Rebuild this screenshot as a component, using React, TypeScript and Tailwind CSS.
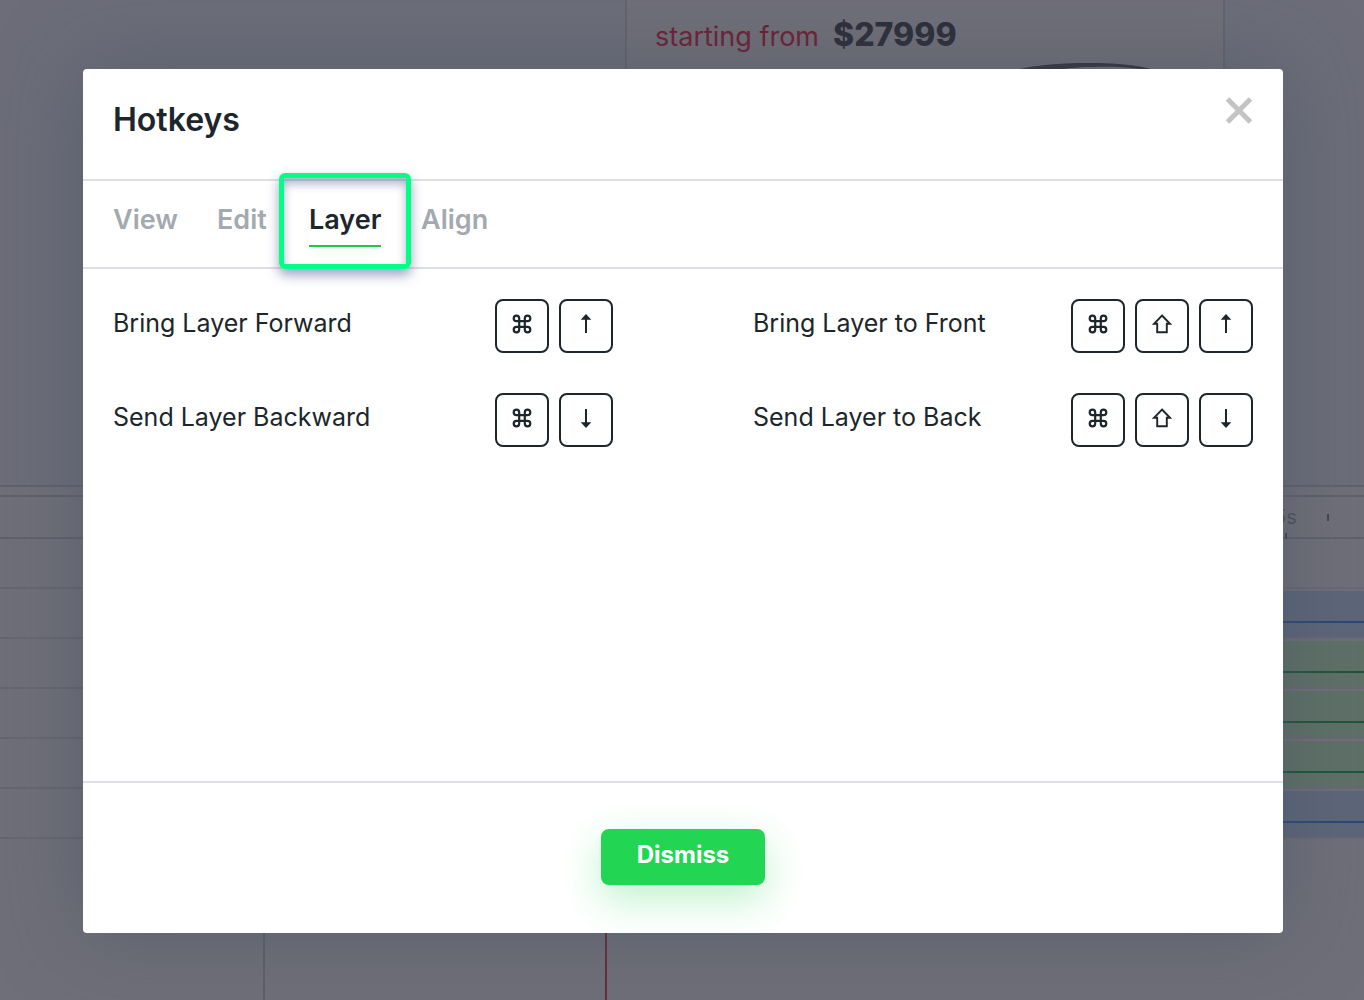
import React, { useState } from "react";

type KeyName = "cmd" | "shift" | "up" | "down";

const tabs = [
  { name: "View", width: "w-16" },
  { name: "Edit", width: "w-[52px]" },
  { name: "Layer", width: "w-[72px]" },
  { name: "Align", width: "w-[68px]" },
];

const hotkeys: { label: string; keys: KeyName[] }[] = [
  { label: "Bring Layer Forward", keys: ["cmd", "up"] },
  { label: "Bring Layer to Front", keys: ["cmd", "shift", "up"] },
  { label: "Send Layer Backward", keys: ["cmd", "down"] },
  { label: "Send Layer to Back", keys: ["cmd", "shift", "down"] },
];

const clips = ["none", "blue", "green", "green", "green", "blue"];

const keyLabels: Record<KeyName, string> = {
  cmd: "Command",
  shift: "Shift",
  up: "Arrow up",
  down: "Arrow down",
};

function KeyIcon({ name }: { name: KeyName }) {
  return (
    <svg width="20" height="20" viewBox="0 0 20 20" fill="none" stroke="currentColor" role="img" aria-label={keyLabels[name]}>
      {name === "cmd" && (
        <path
          strokeWidth="2.2"
          d="M7.200 7.200H4.500C2.600 7.200 1.700 6 1.700 4.500C1.700 2.900 2.900 1.700 4.500 1.700C6.100 1.700 7.200 2.900 7.200 4.500V15.500C7.200 17.100 6.100 18.300 4.500 18.300C2.900 18.300 1.700 17.100 1.700 15.500C1.700 14 2.600 12.800 4.500 12.800H15.500C17.400 12.800 18.300 14 18.300 15.500C18.300 17.100 17.100 18.300 15.500 18.300C13.900 18.300 12.800 17.100 12.800 15.500V4.500C12.800 2.900 13.900 1.700 15.500 1.700C17.100 1.700 18.300 2.900 18.300 4.500C18.300 6 17.400 7.200 15.500 7.200H7.200Z"
        />
      )}
      {name === "shift" && <path strokeWidth="1.9" d="M10 1.500L18 9.800H14.800V18.200H5.200V9.800H2L10 1.500Z" />}
      {name === "up" && (
        <>
          <path strokeWidth="2" d="M10 5V19" />
          <path fill="currentColor" stroke="none" d="M10 0L15.300 5.800H4.700Z" />
        </>
      )}
      {name === "down" && (
        <>
          <path strokeWidth="2" d="M10 1V15" />
          <path fill="currentColor" stroke="none" d="M10 20L15.300 14.200H4.700Z" />
        </>
      )}
    </svg>
  );
}

function Clip({ kind }: { kind: string }) {
  if (kind === "none") return null;
  return kind === "blue" ? (
    <div className="h-[46px] bg-[#5d6679] pt-[30px]">
      <div className="h-0.5 bg-[#2b4877]" />
    </div>
  ) : (
    <div className="h-[46px] bg-[#5f7067] pt-[30px]">
      <div className="h-0.5 bg-[#1e563b]" />
    </div>
  );
}

function Editor() {
  return (
    <div className="absolute inset-0 flex flex-col overflow-hidden bg-[#6f6f79]" aria-hidden="true">
      <div className="flex h-[485px] shrink-0 bg-[#6c6d79] pl-[625px]">
        <div className="w-[600px] border-x-2 border-[#62646f] bg-[#706f79]">
          <div className="flex items-baseline gap-3.5 whitespace-nowrap pl-7 pt-[15px]">
            <span className="text-[27px] leading-10 text-[#6e2034]">starting from</span>
            <span className="text-[32px] font-extrabold leading-10 text-[#2d2e39]">$27999</span>
          </div>
          <svg className="ml-[350px] mt-1" width="230" height="40" viewBox="0 0 230 40">
            <path d="M20 14C45 6 70 2 110 2C145 2 165 4 195 14C165 7 145 5 115 6C95 6 80 8 68 14L60 40H0Z" fill="#34323f" />
          </svg>
        </div>
      </div>
      <div className="h-3 shrink-0 border-y-2 border-[#60616c]" />
      <div className="flex grow">
        <div className="w-[265px] shrink-0 border-r-2 border-[#5d5f6b]">
          <div className="h-[42px] border-b-2 border-[#60616c]" />
          {clips.map((_, i) => (
            <div key={i} className="h-[50px] border-b-2 border-[#66666f]" />
          ))}
        </div>
        <div className="relative grow">
          <div className="flex h-[42px] border-b-2 border-[#60616c] pl-[1009px]">
            <span className="text-xl leading-10 text-[#50515c]">5s</span>
            <span className="mt-[17px] ml-[30px] h-[7px] w-0.5 bg-[#454651]" />
          </div>
          {clips.map((kind, i) => (
            <div key={i} className="h-[50px] border-b-2 border-[#6a6874] pt-0.5">
              <Clip kind={kind} />
            </div>
          ))}
          <div className="absolute inset-y-0 left-[340px] w-0.5 bg-[#692b3a]" />
          <div className="absolute left-[1020px] top-9 h-1.5 w-0.5 bg-[#454651]" />
        </div>
      </div>
    </div>
  );
}

export default function App() {
  const [active, setActive] = useState("Layer");
  const [open, setOpen] = useState(true);

  return (
    <main className="relative min-h-screen overflow-hidden font-['Inter',sans-serif] text-[#1c262b]">
      <Editor />
      {open && (
        <div className="relative pb-[67px] pl-[83px] pr-[81px] pt-[69px]">
          <section
            role="dialog"
            aria-modal="true"
            aria-labelledby="hotkeys-title"
            className="mx-auto flex max-w-[1200px] flex-col rounded bg-white shadow-[0_0_80px_rgba(68,82,96,0.5)]"
          >
            <header className="flex h-28 items-start justify-between border-b-2 border-[#dfe0e5] px-[30px] pt-7">
              <h1 id="hotkeys-title" className="text-[32px] font-semibold leading-[46px]">
                Hotkeys
              </h1>
              <button type="button" aria-label="Close" onClick={() => setOpen(false)} className="text-[#c3c3c3]">
                <svg width="28" height="28" viewBox="0 0 28 28" fill="none" stroke="currentColor" strokeWidth="5">
                  <path d="M2.500 2L25.500 25M25.500 2L2.500 25" />
                </svg>
              </button>
            </header>

            <nav role="tablist" className="flex h-[88px] gap-10 border-b-2 border-[#dfe0e5] px-[30px] pt-4">
              {tabs.map((tab) => (
                <div key={tab.name} className={`relative ${tab.width}`}>
                  {active === tab.name && (
                    <div className="pointer-events-none absolute -left-[30px] -right-[30px] -top-6 h-24 rounded-md border-[5px] border-[#00ff87] shadow-[0_6px_12px_rgba(50,75,130,0.5),inset_0_6px_10px_rgba(50,75,130,0.4)]" />
                  )}
                  <button
                    role="tab"
                    type="button"
                    aria-selected={active === tab.name}
                    onClick={() => setActive(tab.name)}
                    className={`h-[50px] w-full whitespace-nowrap border-b-2 pb-0.5 text-left text-[27px] font-semibold leading-10 ${
                      active === tab.name
                        ? "border-[#22c552] text-[#1c262b] shadow-[0_10px_14px_-4px_rgba(34,213,83,0.08)]"
                        : "border-transparent text-[#a4a9af]"
                    }`}
                  >
                    {tab.name}
                  </button>
                </div>
              ))}
            </nav>

            <div className="min-h-[512px] px-[30px] pt-[30px]">
              <ul className="grid grid-cols-2 gap-x-[140px] gap-y-10">
                {hotkeys.map((item) => (
                  <li key={item.label} className="flex items-start justify-between">
                    <span className="text-[25px] leading-[48px]">{item.label}</span>
                    <span className="flex gap-2.5">
                      {item.keys.map((key) => (
                        <kbd key={key} className="flex size-[54px] items-center justify-center rounded-lg border-2 border-[#1c262b] pb-1">
                          <KeyIcon name={key} />
                        </kbd>
                      ))}
                    </span>
                  </li>
                ))}
              </ul>
            </div>

            <footer className="flex h-[152px] items-start justify-center border-t-2 border-[#dfe0e5] pt-[46px]">
              <button
                type="button"
                onClick={() => setOpen(false)}
                className="h-14 w-[164px] rounded-lg bg-[#22d553] pb-1 text-2xl font-bold text-white shadow-[0_14px_40px_rgba(34,213,83,0.3)]"
              >
                Dismiss
              </button>
            </footer>
          </section>
        </div>
      )}
    </main>
  );
}
